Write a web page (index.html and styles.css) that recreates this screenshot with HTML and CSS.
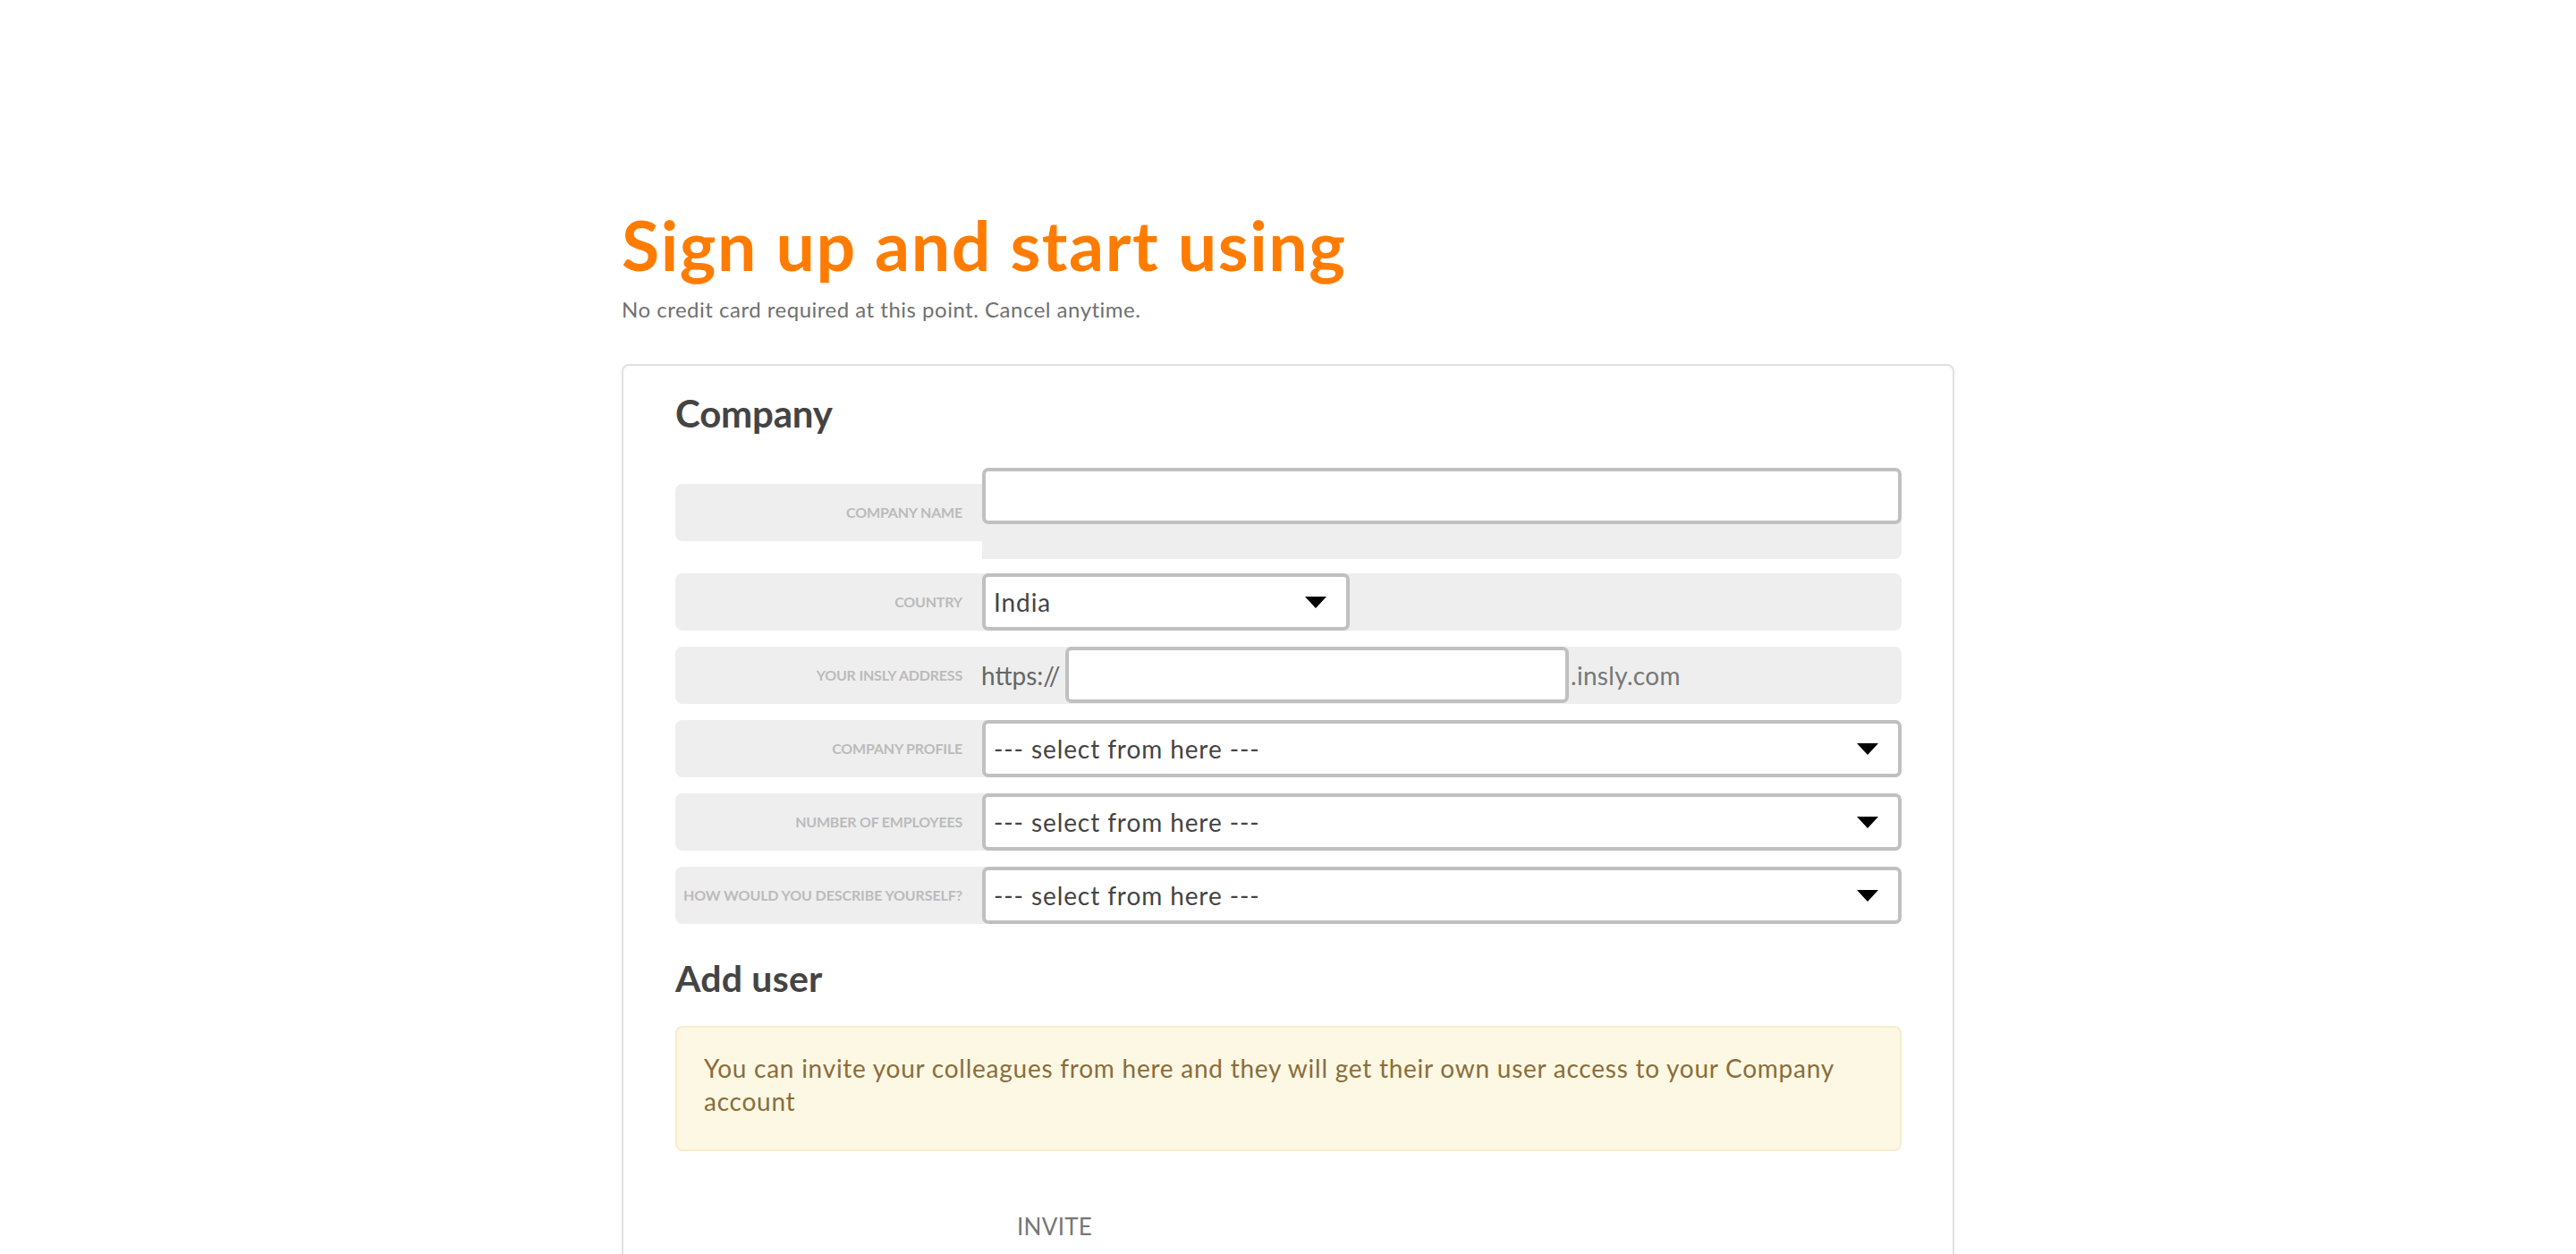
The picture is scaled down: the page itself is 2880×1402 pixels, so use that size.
FILE: index.html
```html
<!DOCTYPE html>
<html lang="en">
<head>
<meta charset="utf-8">
<title>Sign up</title>
<link rel="stylesheet" href="styles.css">
</head>
<body>
<div class="page">
  <h1 class="title">Sign up and start using</h1>
  <p class="subtitle">No credit card required at this point. Cancel anytime.</p>
  <div class="card">
    <h2 class="section-title">Company</h2>
    <div class="rows">
      <div class="row row-first">
        <div class="label">Company name</div>
        <div class="field field-tall">
          <input class="input input-raised" type="text">
        </div>
      </div>
      <div class="row">
        <div class="label">Country</div>
        <div class="field">
          <div class="select-wrap select-short">
            <select class="select"><option>India</option></select>
          </div>
        </div>
      </div>
      <div class="row">
        <div class="label">Your insly address</div>
        <div class="field">
          <span class="addon addon-pre">https://</span>
          <input class="input input-address" type="text">
          <span class="addon addon-post">.insly.com</span>
        </div>
      </div>
      <div class="row">
        <div class="label">Company profile</div>
        <div class="field">
          <div class="select-wrap"><select class="select"><option>--- select from here ---</option></select></div>
        </div>
      </div>
      <div class="row">
        <div class="label">Number of employees</div>
        <div class="field">
          <div class="select-wrap"><select class="select"><option>--- select from here ---</option></select></div>
        </div>
      </div>
      <div class="row">
        <div class="label label-long">How would you describe yourself?</div>
        <div class="field">
          <div class="select-wrap"><select class="select"><option>--- select from here ---</option></select></div>
        </div>
      </div>
    </div>
    <h2 class="section-title section-user">Add user</h2>
    <div class="alert">You can invite your colleagues from here and they will get their own user access to your Company account</div>
    <div class="invite-head"><span class="invite">Invite</span></div>
  </div>
</div>
</body>
</html>
```

FILE: styles.css
```css
* { box-sizing: border-box; }
html, body { margin: 0; padding: 0; background: #fff; }
body { font-family: Lato, "Noto Sans", sans-serif; color: #444; }

.page {
  width: 1490px;
  margin: 0 auto;
  padding-top: 235px;
  padding-bottom: 200px;
}

.title {
  margin: 0;
  font-size: 77px;
  line-height: 1;
  font-weight: 700;
  color: #ff7c00;
  letter-spacing: 1.6px;
}

.subtitle {
  margin: 20px 0 0;
  font-size: 24px;
  line-height: 1.2;
  color: #707070;
  letter-spacing: 0.5px;
}

.card {
  margin-top: 46px;
  border: 2px solid #e1e1e1;
  border-radius: 8px;
  padding: 32px 57px 300px 58px;
}

.section-title {
  margin: 0;
  font-size: 42px;
  line-height: 1;
  font-weight: 700;
  color: #444;
  letter-spacing: -0.2px;
}

.rows {
  margin-top: 58px;
  display: flex;
  flex-direction: column;
  gap: 18px;
}

.row {
  display: flex;
  align-items: flex-start;
}
.row-first { margin-bottom: -2px; }

.label {
  width: 343px;
  flex: none;
  height: 64px;
  background: #eee;
  border-radius: 8px 0 0 8px;
  display: flex;
  align-items: center;
  justify-content: flex-end;
  padding: 0 22px 0 8px;
  font-size: 16px;
  font-weight: 700;
  text-transform: uppercase;
  color: #bbb;
  white-space: nowrap;
  letter-spacing: -0.2px;
}
.label-long { letter-spacing: -0.1px; }

.field {
  flex: 1;
  height: 64px;
  background: #eee;
  border-radius: 0 8px 8px 0;
  display: flex;
  align-items: center;
}
.field-tall {
  height: 84px;
  align-items: flex-start;
}

.input {
  height: 64px;
  border: 4px solid #c0c0c0;
  border-radius: 7px;
  background: #fff;
  font-family: inherit;
  font-size: 28px;
  color: #444;
  padding: 0 10px;
  outline: none;
}
.input-raised {
  width: 100%;
  height: 63px;
  margin-top: -18px;
}
.input-address {
  width: 563px;
  height: 63px;
}

.addon {
  font-size: 28px;
  color: #666;
  line-height: 1;
}
.addon-pre { width: 94px; flex: none; margin-left: -1px; }
.addon-post { margin-left: 2px; color: #777; letter-spacing: 0.3px; }

.select-wrap {
  position: relative;
  width: 100%;
  height: 64px;
}
.select-short { width: 411px; }
.select-wrap::after {
  content: "";
  position: absolute;
  right: 26px;
  top: 26px;
  border-left: 12px solid transparent;
  border-right: 12px solid transparent;
  border-top: 13px solid #000;
  pointer-events: none;
}
.select {
  -webkit-appearance: none;
  appearance: none;
  width: 100%;
  height: 64px;
  border: 4px solid #c0c0c0;
  border-radius: 7px;
  background: #fff;
  font-family: inherit;
  font-size: 28px;
  color: #444;
  letter-spacing: 0.9px;
  padding: 0 50px 0 9px;
  outline: none;
}

.section-user {
  margin-top: 40px;
  font-size: 41px;
  letter-spacing: 0.2px;
}

.alert {
  margin-top: 33px;
  border: 2px solid #faebcc;
  border-radius: 8px;
  background: #fcf8e3;
  color: #8a6d3b;
  font-size: 28px;
  line-height: 37px;
  letter-spacing: 0.75px;
  padding: 27px 30px 35px;
}

.invite-head {
  margin-top: 69px;
  padding-left: 382px;
}
.invite {
  font-size: 26px;
  line-height: 1.2;
  text-transform: uppercase;
  color: #777;
  letter-spacing: 0.3px;
}
```
